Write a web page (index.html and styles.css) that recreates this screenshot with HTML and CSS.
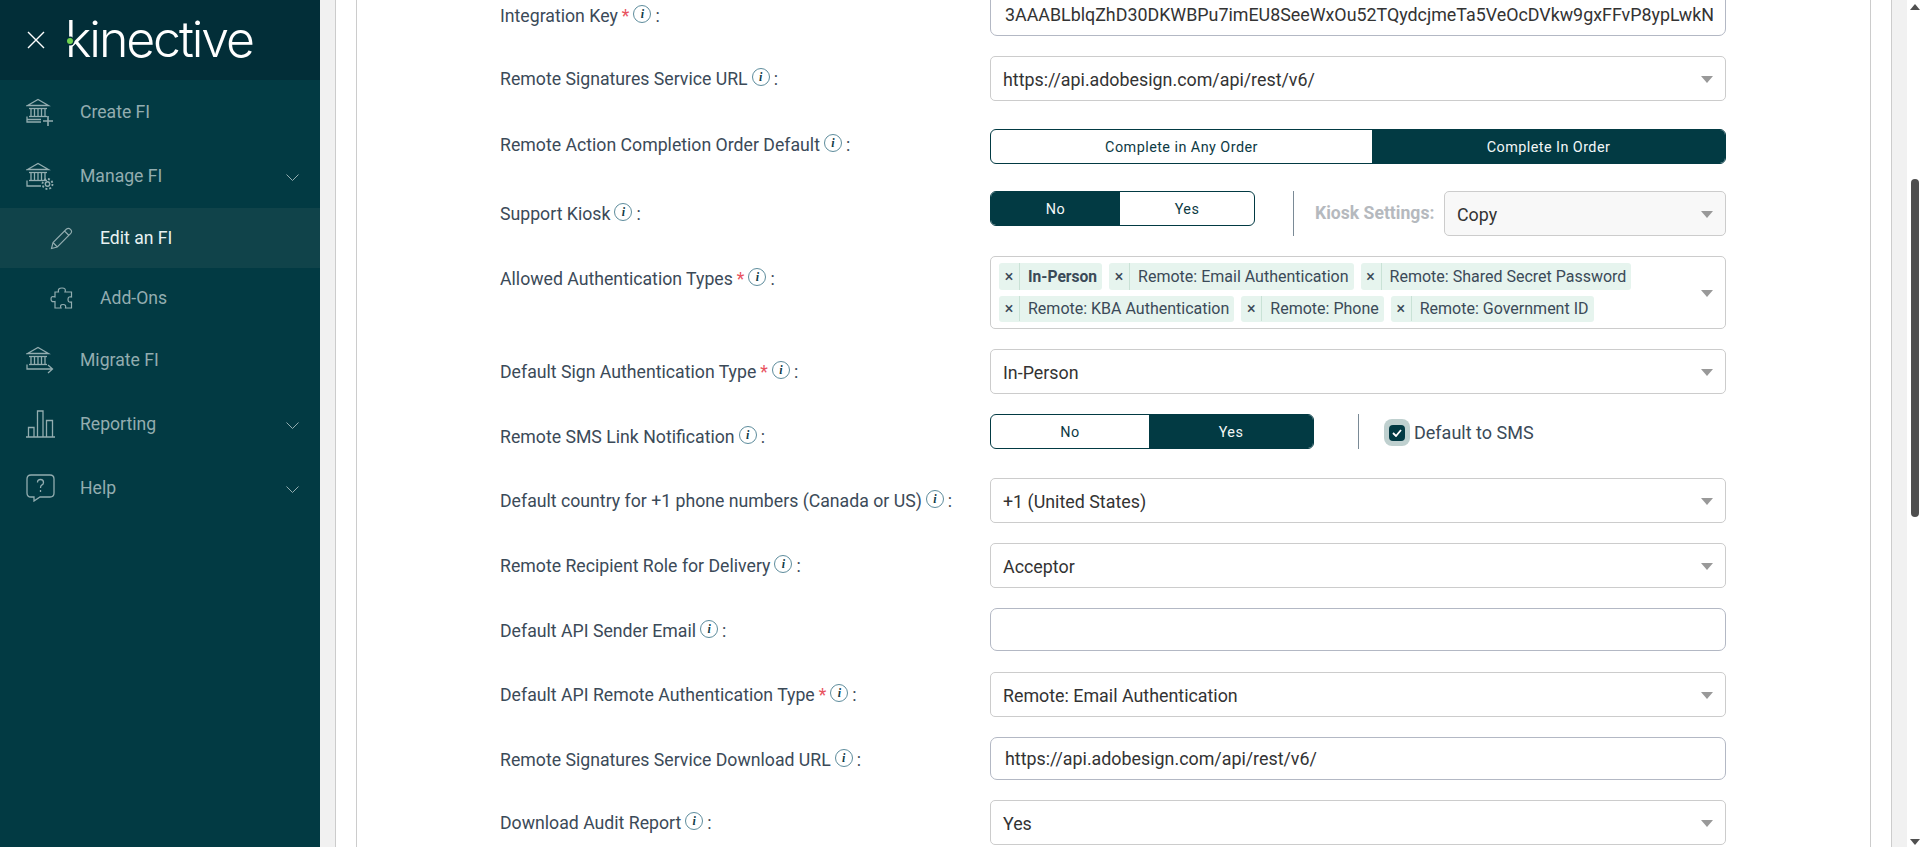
FILE: index.html
```html
<!DOCTYPE html>
<html lang="en">
<head>
<meta charset="utf-8">
<title>Edit an FI</title>
<link rel="stylesheet" href="styles.css">
</head>
<body>
<svg class="defs" width="0" height="0" aria-hidden="true">
  <defs>
    <g id="bank" fill="none" stroke="currentColor" stroke-width="1.3">
      <path d="M1.5 7.5 L12 1.5 L22.5 7.5 Z"/>
      <path d="M3 10.5 H21"/>
      <path d="M5 10.5 V18.5 M8.5 10.5 V18.5 M12 10.5 V18.5 M15.5 10.5 V18.5 M19 10.5 V18.5"/>
      <path d="M3 18.5 H21"/>
    </g>
  </defs>
</svg>
<aside class="sidebar">
  <header class="brand">
    <svg class="close" width="18" height="18" viewBox="0 0 18 18"><path d="M1 1 L17 17 M17 1 L1 17" stroke="#fff" stroke-width="1.4" fill="none"/></svg>
    <div class="logo">kinective<span class="logo-dot"></span></div>
  </header>
  <nav class="nav">
    <a class="nav-item">
      <svg class="nav-icon" width="28" height="28" viewBox="0 0 28 28"><use href="#bank"/><path d="M1 21.5 H15 M1 18.5 V24 H15" fill="none" stroke="currentColor" stroke-width="1.3"/><path d="M22 18 V28 M17 23 H27" fill="none" stroke="currentColor" stroke-width="1.6"/></svg>
      <span>Create FI</span>
    </a>
    <a class="nav-item">
      <svg class="nav-icon" width="28" height="28" viewBox="0 0 28 28"><use href="#bank"/><path d="M1 18.5 V24 H15" fill="none" stroke="currentColor" stroke-width="1.3"/><circle cx="21.5" cy="22" r="2.2" fill="none" stroke="currentColor" stroke-width="1.4"/><circle cx="21.5" cy="22" r="5" fill="none" stroke="currentColor" stroke-width="1.8" stroke-dasharray="2 1.9"/></svg>
      <span>Manage FI</span>
      <svg class="chev" width="13" height="7" viewBox="0 0 13 7"><path d="M.5.5 L6.5 6.5 L12.5.5" fill="none" stroke="currentColor"/></svg>
    </a>
    <a class="nav-item sub active">
      <svg class="nav-icon sub-icon" width="23" height="23" viewBox="0 0 23 23"><path d="M1.5 21.5 L3 15.5 L16.5 2 Q18.5 .5 20.5 2.3 Q22.5 4.5 20.8 6.3 L7.3 20 Z M3 15.5 L7.3 20 M14.5 4 L19 8.5" fill="none" stroke="currentColor" stroke-width="1.1"/></svg>
      <span>Edit an FI</span>
    </a>
    <a class="nav-item sub">
      <svg class="nav-icon sub-icon" width="23" height="23" viewBox="0 0 23 23"><path d="M8.5 5 H5 V10 Q1 8.5 1 12 T5 14.5 V21 H11 Q9.5 17.5 13 17.5 T15.5 21 H21.5 V15 Q18 16 18 12.5 T21.5 10 V5 H15 Q16.5 1 12 1 T8.5 5 Z" fill="none" stroke="currentColor" stroke-width="1.2"/></svg>
      <span>Add-Ons</span>
    </a>
    <a class="nav-item">
      <svg class="nav-icon" width="28" height="28" viewBox="0 0 28 28"><use href="#bank"/><path d="M1 18.5 V23 H26 M22 19 L26.5 23 L22 27" fill="none" stroke="currentColor" stroke-width="1.3"/></svg>
      <span>Migrate FI</span>
    </a>
    <a class="nav-item">
      <svg class="nav-icon wide" width="29" height="28" viewBox="0 0 29 28"><path d="M0 27 H29 M2.5 27 V17.5 H8 V27 M11.5 27 V1 H17 V27 M20.5 27 V10.5 H26.5 V27" fill="none" stroke="currentColor" stroke-width="1.3"/></svg>
      <span>Reporting</span>
      <svg class="chev" width="13" height="7" viewBox="0 0 13 7"><path d="M.5.5 L6.5 6.5 L12.5.5" fill="none" stroke="currentColor"/></svg>
    </a>
    <a class="nav-item">
      <svg class="nav-icon wide" width="29" height="28" viewBox="0 0 29 28"><path d="M5 1 H24 Q28 1 28 5 V19 Q28 23 24 23 H14 L8 27 V23 H5 Q1 23 1 19 V5 Q1 1 5 1 Z" fill="none" stroke="currentColor" stroke-width="1.3"/><path d="M11.5 8.5 Q11.5 5.5 14.5 5.5 T17.5 8.5 Q17.5 10.3 15.7 11.2 Q14.5 11.8 14.5 14 M14.5 16 V18" fill="none" stroke="currentColor" stroke-width="1.3"/></svg>
      <span>Help</span>
      <svg class="chev" width="13" height="7" viewBox="0 0 13 7"><path d="M.5.5 L6.5 6.5 L12.5.5" fill="none" stroke="currentColor"/></svg>
    </a>
  </nav>
</aside>
<main class="main">
  <div class="pane">
    <section class="card">
      <form class="form">
        <div class="row row-input">
          <div class="label">Integration Key<span class="req">*</span><span class="info">i</span><span class="colon">:</span></div>
          <div class="input key"><span class="clip">3AAABLblqZhD30DKWBPu7imEU8SeeWxOu52TQydcjmeTa5VeOcDVkw9gxFFvP8ypLwkNj</span></div>
        </div>
        <div class="row action-prev">
          <div class="label">Remote Signatures Service URL<span class="info">i</span><span class="colon">:</span></div>
          <div class="select">https://api.adobesign.com/api/rest/v6/<i class="caret"></i></div>
        </div>
        <div class="row action">
          <div class="label">Remote Action Completion Order Default<span class="info">i</span><span class="colon">:</span></div>
          <div class="toggle toggle-wide"><span class="opt w382">Complete in Any Order</span><span class="opt on grow">Complete In Order</span></div>
        </div>
        <div class="row">
          <div class="label">Support Kiosk<span class="info">i</span><span class="colon">:</span></div>
          <div class="inline">
            <div class="toggle toggle-kiosk"><span class="opt on w130">No</span><span class="opt grow">Yes</span></div>
            <div class="divider kiosk-divider"></div>
            <div class="kiosk-label">Kiosk Settings:</div>
            <div class="select disabled">Copy<i class="caret"></i></div>
          </div>
        </div>
        <div class="row">
          <div class="label">Allowed Authentication Types<span class="req">*</span><span class="info">i</span><span class="colon">:</span></div>
          <div class="multi">
            <span class="chip"><b class="x">×</b><strong>In-Person</strong></span>
            <span class="chip"><b class="x">×</b>Remote: Email Authentication</span>
            <span class="chip"><b class="x">×</b>Remote: Shared Secret Password</span>
            <span class="chip low"><b class="x">×</b>Remote: KBA Authentication</span>
            <span class="chip low"><b class="x">×</b>Remote: Phone</span>
            <span class="chip low"><b class="x">×</b>Remote: Government ID</span>
            <i class="caret"></i>
          </div>
        </div>
        <div class="row">
          <div class="label">Default Sign Authentication Type<span class="req">*</span><span class="info">i</span><span class="colon">:</span></div>
          <div class="select">In-Person<i class="caret"></i></div>
        </div>
        <div class="row">
          <div class="label">Remote SMS Link Notification<span class="info">i</span><span class="colon">:</span></div>
          <div class="inline">
            <div class="toggle toggle-sms"><span class="opt w159">No</span><span class="opt on grow">Yes</span></div>
            <div class="divider sms-divider"></div>
            <label class="check"><span class="halo"><span class="box"><svg width="10" height="8" viewBox="0 0 10 8"><path d="M1 4 L4 7 L9 1" fill="none" stroke="#fff" stroke-width="1.8"/></svg></span></span>Default to SMS</label>
          </div>
        </div>
        <div class="row">
          <div class="label">Default country for +1 phone numbers (Canada or US)<span class="info">i</span><span class="colon">:</span></div>
          <div class="select">+1 (United States)<i class="caret"></i></div>
        </div>
        <div class="row">
          <div class="label">Remote Recipient Role for Delivery<span class="info">i</span><span class="colon">:</span></div>
          <div class="select">Acceptor<i class="caret"></i></div>
        </div>
        <div class="row">
          <div class="label">Default API Sender Email<span class="info">i</span><span class="colon">:</span></div>
          <div class="input"></div>
        </div>
        <div class="row">
          <div class="label">Default API Remote Authentication Type<span class="req">*</span><span class="info">i</span><span class="colon">:</span></div>
          <div class="select">Remote: Email Authentication<i class="caret"></i></div>
        </div>
        <div class="row row-input">
          <div class="label">Remote Signatures Service Download URL<span class="info">i</span><span class="colon">:</span></div>
          <div class="input">https://api.adobesign.com/api/rest/v6/</div>
        </div>
        <div class="row">
          <div class="label">Download Audit Report<span class="info">i</span><span class="colon">:</span></div>
          <div class="select">Yes<i class="caret"></i></div>
        </div>
      </form>
    </section>
  </div>
</main>
<div class="scrollbar">
  <i class="arrow up"></i>
  <div class="thumb"></div>
  <i class="arrow down"></i>
</div>
</body>
</html>
```
FILE: styles.css
```css
* { box-sizing: border-box; }
html, body { margin: 0; height: 847px; overflow: hidden; }
body { display: flex; font-family: Roboto, "Liberation Sans", sans-serif; color: #3b4a58; background: #fff; }
.defs { position: absolute; }

.sidebar { width: 320px; flex: none; background: #023a43; color: #93adb0; }
.brand { height: 80px; background: #022e38; display: flex; align-items: center; padding-left: 27px; }
.close { flex: none; }
.logo { position: relative; margin-left: 20px; margin-top: -2px; font-family: Inter, sans-serif; font-weight: 350; font-size: 50px; letter-spacing: -2.1px; color: #fff; line-height: 50px; }
.logo-dot { position: absolute; left: 2px; top: 24px; width: 6px; height: 6px; border-radius: 50%; background: #6fd24f; box-shadow: 0 0 0 1.5px #022e38; }

.nav-item { display: flex; align-items: center; height: 64px; padding-left: 26px; font-size: 17.6px; position: relative; }
.nav-icon { flex: none; margin-right: 26px; }
.nav-icon.wide { margin-right: 25px; }
.nav-item.sub { height: 60px; padding-left: 50px; }
.sub-icon { margin-right: 27px; color: #93adb0; }
.nav-item.active { background: #10434a; color: #e8f2f2; }
.chev { position: absolute; left: 286px; top: 30px; color: #93adb0; }

.main { flex: 1; min-width: 0; background: #f1f1f1; padding: 0 15px; }
.pane { height: 847px; background: #fff; border-left: 1px solid #ccc; border-right: 1px solid #ccc; padding: 0 20px; overflow: hidden; }
.card { height: 847px; border-left: 1px solid #ccc; border-right: 1px solid #ccc; padding-left: 143px; overflow: hidden; }
.form { margin-top: -7px; }

.row { display: grid; grid-template-columns: 490px 736px; align-items: start; margin-bottom: 20px; }
.row.row-input { margin-bottom: 19px; }
.row.action-prev { margin-bottom: 21px; }
.row.action { margin-bottom: 25px; }

.label { font-size: 17.7px; height: 44px; padding-top: 2px; line-height: 42px; color: #3b4a58; white-space: nowrap; display: flex; align-items: center; }
.req { color: #e8535f; margin-left: 4px; font-size: 17.6px; }
.info { width: 18px; height: 18px; margin-left: 4px; margin-top: -4px; border: 1px solid #5d8c9c; border-radius: 50%; display: inline-flex; align-items: center; justify-content: center; font: italic 700 12px/1 "Liberation Serif", serif; color: #123c47; }
.colon { margin-left: 4px; }

.input, .select, .multi { width: 736px; background: #fff; font-size: 17.85px; color: #333; }
.input { height: 43px; border: 1px solid #b3b8c4; border-radius: 7px; line-height: 41px; padding: 0 14px; white-space: nowrap; overflow: hidden; }
.input.key { padding-right: 12px; }
.clip { display: block; overflow: hidden; }
.select { height: 45px; border: 1px solid #ccc; border-radius: 5px; line-height: 43px; padding: 1px 12px 0; position: relative; white-space: nowrap; }
.select.disabled { width: 282px; background: #f8f8f8; }
.caret { position: absolute; right: 12px; top: 50%; margin-top: -3px; width: 0; height: 0; border-left: 6px solid transparent; border-right: 6px solid transparent; border-top: 7px solid #999; }

.toggle { display: flex; height: 35px; border: 1px solid #023a43; border-radius: 6px; overflow: hidden; font-size: 14.4px; letter-spacing: .45px; color: #0d3a44; background: #fff; }
.toggle-wide { width: 736px; margin-top: 7px; }
.toggle-kiosk { width: 265px; }
.toggle-sms { width: 324px; }
.opt { display: flex; align-items: center; justify-content: center; padding-top: 2px; }
.opt.on { background: #023a43; color: #f2f7f7; }
.opt.grow { flex: 1; }
.w382 { width: 381px; }
.w130 { width: 129px; }
.w159 { width: 158px; }

.inline { display: flex; align-items: flex-start; }
.divider { width: 1px; background: #7a8a96; flex: none; }
.kiosk-divider { height: 45px; margin-left: 38px; }
.sms-divider { height: 35px; margin-left: 44px; }
.kiosk-label { width: 129px; margin-left: 21px; font-size: 17.6px; font-weight: 700; color: #b5b9be; line-height: 44px; white-space: nowrap; }

.check { display: flex; align-items: center; font-size: 18px; color: #3b4a58; margin-left: 25px; height: 37px; }
.halo { width: 26px; height: 27px; margin-right: 4px; border-radius: 8px; background: #bfd0cf; display: flex; align-items: center; justify-content: center; }
.box { width: 16px; height: 16px; border-radius: 4px; background: #023a43; display: flex; align-items: center; justify-content: center; }

.multi { height: 73px; border: 1px solid #ccc; border-radius: 5px; padding: 6px 8px 0; display: flex; flex-wrap: wrap; align-content: flex-start; gap: 6px 7px; position: relative; }
.chip { height: 27px; background: #e6f4ee; border-radius: 3px; display: flex; align-items: center; font-size: 16px; color: #3b4a58; padding-right: 5px; white-space: nowrap; }
.chip.low { height: 26px; padding-bottom: 1px; }
.chip strong { font-weight: 700; font-size: 15.6px; }
.x { width: 21px; height: 100%; margin-right: 8px; border-right: 1px solid #c9e2d6; display: flex; align-items: center; justify-content: center; font-weight: 500; font-size: 16px; color: #3b4a58; }

.scrollbar { width: 13px; flex: none; background: #fff; height: 847px; display: flex; flex-direction: column; align-items: center; padding: 4px 0 2px 2px; }
.arrow { width: 0; height: 0; border-left: 5px solid transparent; border-right: 5px solid transparent; }
.arrow.up { border-bottom: 6px solid #505050; }
.arrow.down { border-top: 6px solid #505050; margin-top: auto; }
.thumb { width: 8px; height: 338px; margin-top: 169px; background: #4f4f4f; border-radius: 4px; }
```
